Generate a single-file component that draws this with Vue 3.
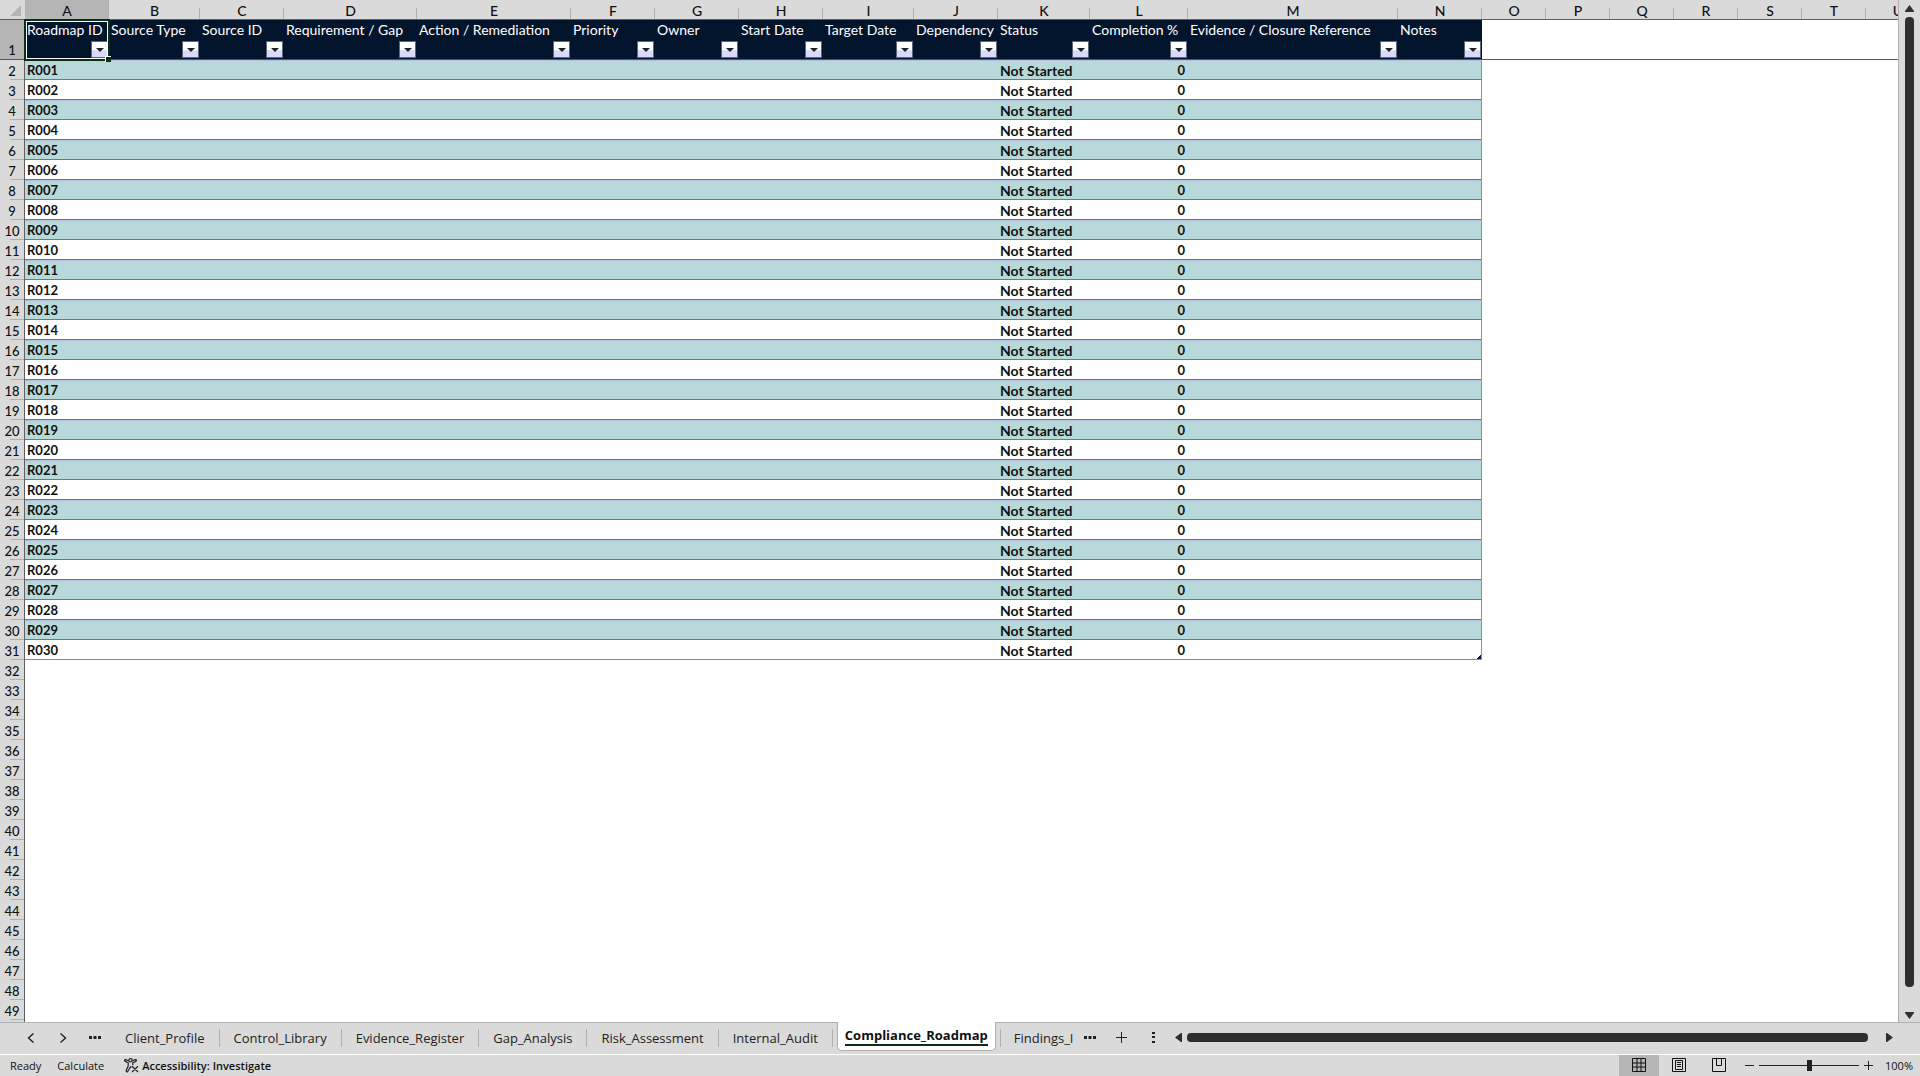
<template>
  <div class="workbook">
    <div class="sheet-area">
      <div class="grid">
        <table>
          <colgroup>
            <col class="gutter-col">
            <col v-for="col in columns" :key="col.letter" :style="{ width: col.width + 'px' }">
          </colgroup>
          <thead>
            <tr>
              <th class="corner">
                <svg width="11" height="11" viewBox="0 0 11 11" aria-hidden="true"><path d="M11 0V11H0Z" fill="#b4b4b4" /></svg>
              </th>
              <th
                v-for="col in columns"
                :key="col.letter"
                scope="col"
                class="col-head"
                :class="{ selected: col.letter === 'A' }"
              >{{ col.letter }}</th>
            </tr>
          </thead>
          <tbody>
            <tr class="title-row">
              <th scope="row" class="row-head selected">1</th>
              <td v-for="col in columns" :key="col.letter" :class="{ titled: col.title, active: col.letter === 'A' }">
                <div v-if="col.title" class="title-cell">
                  <span>{{ col.title }}</span>
                  <button type="button" class="filter" :aria-label="'Filter ' + col.title">
                    <svg width="8" height="4" viewBox="0 0 8 4" aria-hidden="true"><path d="M0 0H8L4 4Z" fill="#222" /></svg>
                  </button>
                </div>
                <div v-if="col.letter === 'A'" class="selection"><i></i></div>
              </td>
            </tr>
            <tr v-for="row in rows" :key="row.number" :class="rowClass(row)">
              <th scope="row" class="row-head">{{ row.number }}</th>
              <td
                v-for="col in columns"
                :key="col.letter"
                :class="{ inside: row.id && col.title, last: row.id && col.letter === 'N', code: col.letter === 'A', number: col.letter === 'L' }"
              >{{ cellText(row, col) }}</td>
            </tr>
          </tbody>
        </table>
      </div>
      <div class="v-scroll">
        <button type="button" class="arrow" aria-label="Scroll up">
          <svg width="9" height="7" viewBox="0 0 9 7"><path d="M4.5 0L9 6V7H0V6Z" fill="#2f2f2f" /></svg>
        </button>
        <div class="v-thumb"></div>
        <button type="button" class="arrow" aria-label="Scroll down">
          <svg width="9" height="7" viewBox="0 0 9 7"><path d="M0 0H9V1L4.5 7L0 1Z" fill="#2f2f2f" /></svg>
        </button>
      </div>
    </div>

    <div class="tab-bar">
      <div class="tab-nav">
        <button type="button" aria-label="Previous sheet">
          <svg width="8" height="10" viewBox="0 0 8 10"><path d="M6.5 .5L1.5 5L6.5 9.5" fill="none" stroke="#222" stroke-width="1.4" /></svg>
        </button>
        <button type="button" aria-label="Next sheet">
          <svg width="8" height="10" viewBox="0 0 8 10"><path d="M1.5 .5L6.5 5L1.5 9.5" fill="none" stroke="#222" stroke-width="1.4" /></svg>
        </button>
        <button type="button" aria-label="More sheets before">
          <svg width="12" height="3" viewBox="0 0 12 3"><path d="M0 0H3V3H0ZM4.5 0H7.5V3H4.5ZM9 0H12V3H9Z" fill="#222" /></svg>
        </button>
      </div>
      <nav class="tabs">
        <a
          v-for="tab in tabs"
          :key="tab"
          href="#"
          class="tab"
          :class="{ current: tab === currentTab }"
          @click.prevent="currentTab = tab"
        ><span>{{ tab }}</span></a>
      </nav>
      <div class="tab-tools">
        <button type="button" aria-label="More sheets after">
          <svg width="12" height="3" viewBox="0 0 12 3"><path d="M0 0H3V3H0ZM4.5 0H7.5V3H4.5ZM9 0H12V3H9Z" fill="#222" /></svg>
        </button>
        <button type="button" aria-label="New sheet">
          <svg width="11" height="11" viewBox="0 0 11 11"><path d="M5 0H6V5H11V6H6V11H5V6H0V5H5Z" fill="#222" /></svg>
        </button>
        <button type="button" aria-label="Resize tab bar">
          <svg width="3" height="11" viewBox="0 0 3 11"><path d="M0 0H3V2H0ZM0 4H3V6H0ZM0 9H3V11H0Z" fill="#222" /></svg>
        </button>
      </div>
      <div class="h-scroll">
        <button type="button" class="arrow" aria-label="Scroll left">
          <svg width="7" height="9" viewBox="0 0 7 9"><path d="M7 0V9H6L0 4.5L6 0Z" fill="#2f2f2f" /></svg>
        </button>
        <div class="h-thumb"></div>
        <button type="button" class="arrow" aria-label="Scroll right">
          <svg width="7" height="9" viewBox="0 0 7 9"><path d="M0 0V9H1L7 4.5L1 0Z" fill="#2f2f2f" /></svg>
        </button>
      </div>
    </div>

    <footer class="status-bar">
      <span>Ready</span>
      <span>Calculate</span>
      <button type="button" class="accessibility">
        <svg width="15" height="15" viewBox="0 0 15 15" fill="none" stroke="#222" stroke-width="1.2" aria-hidden="true">
          <circle cx="6.5" cy="2.3" r="1.7" />
          <path d="M4.8 2.8L1.6 1.6C.4 1.4 .2 3 1.2 3.4L4.2 4.8V8L2.2 12.5C2 14 3.4 14.3 3.9 13.2L6.5 8.8L7.2 9.8M8.2 2.8L11.4 1.6C12.6 1.4 12.8 3 11.8 3.4L8.8 4.8V7.2M8 8.2L14 14M14 8.2L8 14" />
        </svg>
        Accessibility: Investigate
      </button>
      <div class="views">
        <button type="button" class="pressed" aria-label="Normal view">
          <svg width="14" height="14" viewBox="0 0 14 14"><path d="M.5 .5H13.5V13.5H.5ZM5 .5V13.5M9 .5V13.5M.5 5H13.5M.5 9H13.5" fill="none" stroke="#111" /></svg>
        </button>
        <button type="button" aria-label="Page layout view">
          <svg width="14" height="14" viewBox="0 0 14 14"><path d="M.5 .5H13.5V13.5H.5ZM3.5 2.5H10.5V11.5H3.5ZM5 4.5H9M5 6.5H9M5 8.5H9" fill="none" stroke="#111" /></svg>
        </button>
        <button type="button" aria-label="Page break view">
          <svg width="14" height="14" viewBox="0 0 14 14"><path d="M.5 .5H13.5V13.5H.5ZM4.5 .5V7.5H9.5V.5" fill="none" stroke="#111" /></svg>
        </button>
      </div>
      <div class="zoom">
        <button type="button" aria-label="Zoom out">
          <svg width="9" height="9" viewBox="0 0 9 9"><path d="M0 4H9V5H0Z" fill="#222" /></svg>
        </button>
        <input v-model="zoom" type="range" min="0" max="100" aria-label="Zoom">
        <button type="button" aria-label="Zoom in">
          <svg width="9" height="9" viewBox="0 0 9 9"><path d="M4 0H5V4H9V5H5V9H4V5H0V4H4Z" fill="#222" /></svg>
        </button>
        <span class="percent">100%</span>
      </div>
    </footer>
  </div>
</template>

<script setup>
import { ref } from 'vue'

const columns = [
  { letter: 'A', width: 84, title: 'Roadmap ID' },
  { letter: 'B', width: 91, title: 'Source Type' },
  { letter: 'C', width: 84, title: 'Source ID' },
  { letter: 'D', width: 133, title: 'Requirement / Gap' },
  { letter: 'E', width: 154, title: 'Action / Remediation' },
  { letter: 'F', width: 84, title: 'Priority' },
  { letter: 'G', width: 84, title: 'Owner' },
  { letter: 'H', width: 84, title: 'Start Date' },
  { letter: 'I', width: 91, title: 'Target Date' },
  { letter: 'J', width: 84, title: 'Dependency' },
  { letter: 'K', width: 92, title: 'Status' },
  { letter: 'L', width: 98, title: 'Completion %' },
  { letter: 'M', width: 210, title: 'Evidence / Closure Reference' },
  { letter: 'N', width: 84, title: 'Notes' },
  ...['O', 'P', 'Q', 'R', 'S', 'T', 'U'].map((letter) => ({ letter, width: 64 }))
]

const ROW_COUNT = 49
const RECORD_COUNT = 30

const rows = Array.from({ length: ROW_COUNT - 1 }, (_, i) => ({
  number: i + 2,
  id: i < RECORD_COUNT ? 'R' + String(i + 1).padStart(3, '0') : '',
  status: 'Not Started',
  completion: 0
}))

const tabs = [
  'Client_Profile',
  'Control_Library',
  'Evidence_Register',
  'Gap_Analysis',
  'Risk_Assessment',
  'Internal_Audit',
  'Compliance_Roadmap',
  'Findings_I'
]

const currentTab = ref('Compliance_Roadmap')
const zoom = ref(50)

const rowClass = (row) => ({
  record: row.id,
  banded: row.id && row.number % 2 === 0,
  final: row.number === RECORD_COUNT + 1
})

const cellText = (row, col) => {
  if (!row.id) return ''
  if (col.letter === 'A') return row.id
  if (col.letter === 'K') return row.status
  if (col.letter === 'L') return row.completion
  return ''
}
</script>

<style>
body {
  margin: 0;
}
</style>

<style scoped>
.workbook {
  display: flex;
  flex-direction: column;
  height: 100vh;
  overflow: hidden;
  background: #dadada;
  color: #111;
  font-family: "Open Sans", sans-serif;
}

button {
  display: flex;
  align-items: center;
  justify-content: center;
  padding: 0;
  border: 0;
  background: none;
  color: inherit;
  font: inherit;
}

svg {
  display: block;
  flex: none;
}

.sheet-area {
  display: flex;
  flex: 1;
  min-height: 0;
}

/* the row gutter runs on below the last row */
.grid {
  flex: 1;
  min-width: 0;
  overflow: hidden;
  border-right: 1px solid #b0b0b0;
  background: linear-gradient(to right, #dadada 24px, #606060 24px 25px, #fff 25px);
}

table {
  width: 0;
  table-layout: fixed;
  border-collapse: separate;
  border-spacing: 0;
  font-family: Lato, sans-serif;
  font-size: 14px;
  line-height: 17px;
}

.gutter-col {
  width: 25px;
}

th,
td {
  box-sizing: border-box;
  height: 20px;
  padding: 0;
  white-space: nowrap;
}

th {
  font-weight: 500;
  text-align: center;
}

.corner,
.col-head {
  padding-top: 1px;
  border-bottom: 1px solid #606060;
  background: #dadada;
}

.corner svg {
  margin-left: 10px;
}

.col-head {
  background: linear-gradient(#b0b0b0, #b0b0b0) right bottom / 1px 11px no-repeat #dadada;
}

.col-head.selected {
  border-bottom-color: #0b2f14;
  background-color: #b5b5b5;
  background-size: 1px 19px;
}

.row-head {
  padding-top: 2px;
  border-right: 1px solid #606060;
  background: linear-gradient(#b0b0b0, #b0b0b0) right bottom / 14px 1px no-repeat #dadada;
  font-size: 13px;
}

.row-head.selected {
  background: #b5b5b5;
  vertical-align: bottom;
}

.title-row th,
.title-row td {
  height: 40px;
  border-bottom: 1px solid #555;
}

.title-row td {
  position: relative;
}

.titled {
  background: #03152d;
  color: #fff;
}

.title-cell {
  display: flex;
  flex-direction: column;
  justify-content: space-between;
  height: 38px;
  padding-bottom: 1px;
}

.title-cell span {
  padding-left: 2px;
  line-height: 20px;
}

.filter {
  box-sizing: border-box;
  align-self: flex-end;
  width: 17px;
  height: 17px;
  margin-right: 1px;
  border: 1px solid #5f6678;
  background: linear-gradient(#fff 50%, #d9f3fb 50%, #d9d9fb 62%);
}

.selection {
  position: absolute;
  inset: -1px -1px -2px -1px;
  border: 2px solid #0b2f14;
  box-shadow: inset 0 0 0 1px #fff;
  pointer-events: none;
}

.selection i {
  position: absolute;
  right: -3px;
  bottom: -3px;
  width: 5px;
  height: 5px;
  border: solid #fff;
  border-width: 1px 0 0 1px;
  background: #0b2f14;
}

.active {
  z-index: 1;
}

.record td {
  padding-top: 2px;
  padding-left: 2px;
  font-weight: 700;
}

.record .inside {
  border-bottom: 1px solid #4a80b8;
}

.banded .inside {
  padding-top: 1px;
  border-top: 1px solid #b4bedd;
  background: #b8d9da;
}

.record .last {
  border-right: 1px solid #6b9cc0;
}

.record .code {
  font-size: 13px;
}

.record .number {
  padding-right: 3px;
  font-size: 13px;
  text-align: right;
}

.final .inside {
  border-bottom-color: #6f8fd6;
}

.final .last {
  background: linear-gradient(135deg, transparent 50%, #0a1a66 50%) right bottom / 5px 5px no-repeat;
}

.v-scroll {
  display: flex;
  flex-direction: column;
  align-items: center;
  width: 21px;
  padding: 5px 0 3px;
  box-sizing: border-box;
}

.v-thumb {
  flex: 1;
  width: 9px;
  margin: 5px 0 25px;
  border-radius: 4px;
  background: #2f2f2f;
}

.tab-bar {
  display: flex;
  height: 33px;
  box-sizing: border-box;
  border-top: 1px solid #b0b0b0;
  border-bottom: 1px solid #fff;
}

.tab-nav {
  display: flex;
  padding-left: 15px;
  padding-bottom: 2px;
}

.tab-nav button {
  width: 32px;
}

.tabs {
  display: flex;
  margin-top: -1px;
  font-size: 13px;
}

.tab {
  position: relative;
  flex: none;
  padding: 1px 15px 0 14px;
  color: #222;
  line-height: 31px;
  text-decoration: none;
}

.tab::after {
  content: "";
  position: absolute;
  top: 7px;
  right: 0;
  width: 1px;
  height: 18px;
  background: #b0b0b0;
}

.tab:last-child {
  padding-right: 0;
}

.tab:last-child::after {
  display: none;
}

.tab.current {
  box-sizing: border-box;
  height: 29px;
  margin: 0 4px;
  padding: 4px 7px 0;
  border: 1px solid #b0b0b0;
  border-top: 0;
  border-radius: 0 0 5px 5px;
  background: #fff;
  color: #111;
  font-weight: 700;
}

.tab.current span {
  display: block;
  border-bottom: 2px solid #0b2f14;
  line-height: 18px;
}

.tab.current::after {
  right: -6px;
}

.tab-tools {
  display: flex;
  padding-bottom: 2px;
}

.tab-tools button {
  width: 32px;
}

.h-scroll {
  display: flex;
  flex: 1;
  align-items: center;
  padding: 0 27px 2px 5px;
}

.h-thumb {
  flex: 1;
  height: 9px;
  margin: 0 18px 0 5px;
  border-radius: 4px;
  background: #2f2f2f;
}

.status-bar {
  display: flex;
  align-items: center;
  gap: 16px;
  height: 21px;
  padding: 0 7px 0 10px;
  font-size: 11px;
  line-height: 21px;
}

.accessibility {
  gap: 3px;
  margin-left: 4px;
  font-weight: 600;
}

.views {
  display: flex;
  align-self: stretch;
  margin-left: auto;
}

.views button {
  width: 40px;
  padding-bottom: 2px;
}

.views .pressed {
  background: #b5b5b5;
}

.zoom {
  display: flex;
  align-items: center;
  gap: 5px;
  margin-left: -10px;
}

.zoom input {
  width: 100px;
  height: 11px;
  margin: 0;
  appearance: none;
  background: linear-gradient(#222, #222) center / 100% 1px no-repeat;
}

.zoom input::-webkit-slider-thumb {
  appearance: none;
  width: 5px;
  height: 11px;
  background: #222;
}

.percent {
  margin-left: 7px;
}
</style>
